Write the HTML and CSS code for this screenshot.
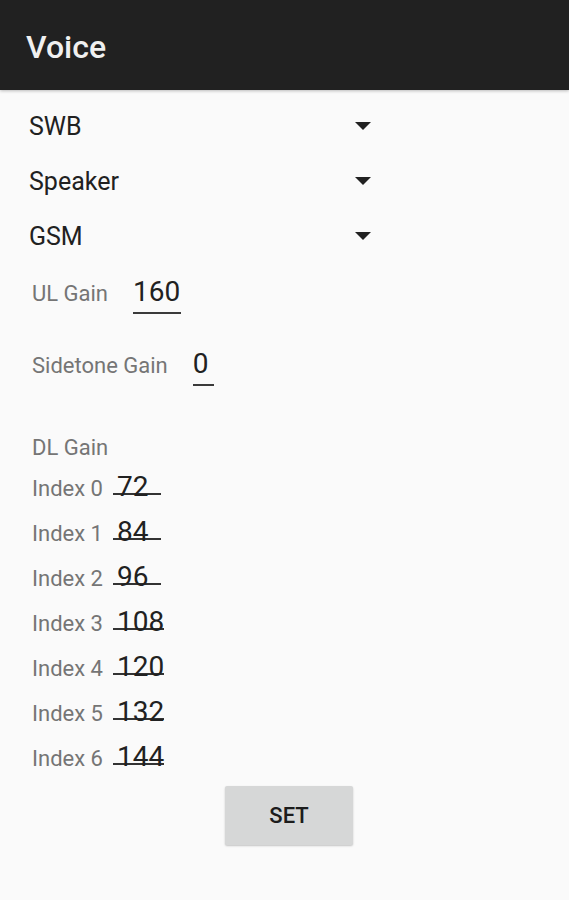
FILE: index.html
```html
<!DOCTYPE html>
<html lang="en">
<head>
<meta charset="utf-8">
<title>Voice</title>
<link rel="stylesheet" href="styles.css">
</head>
<body>
<header class="appbar"><h1 class="title">Voice</h1></header>
<main class="content">
  <div class="spinners">
    <div class="spinner"><span class="spinner-text">SWB</span><svg class="arrow" width="16" height="8" viewBox="0 0 16 8"><path d="M0 0H16L8 8Z"/></svg></div>
    <div class="spinner"><span class="spinner-text">Speaker</span><svg class="arrow" width="16" height="8" viewBox="0 0 16 8"><path d="M0 0H16L8 8Z"/></svg></div>
    <div class="spinner"><span class="spinner-text">GSM</span><svg class="arrow" width="16" height="8" viewBox="0 0 16 8"><path d="M0 0H16L8 8Z"/></svg></div>
  </div>
  <div class="field-row ul-row"><span class="label">UL Gain</span><span class="value ul-value">160</span></div>
  <div class="field-row side-row"><span class="label">Sidetone Gain</span><span class="value side-value">0</span></div>
  <div class="label dl-label">DL Gain</div>
  <div class="index-list">
    <div class="index-row"><span class="label">Index 0</span><span class="index-value">72</span></div>
    <div class="index-row"><span class="label">Index 1</span><span class="index-value">84</span></div>
    <div class="index-row"><span class="label">Index 2</span><span class="index-value">96</span></div>
    <div class="index-row"><span class="label">Index 3</span><span class="index-value">108</span></div>
    <div class="index-row"><span class="label">Index 4</span><span class="index-value">120</span></div>
    <div class="index-row"><span class="label">Index 5</span><span class="index-value">132</span></div>
    <div class="index-row"><span class="label">Index 6</span><span class="index-value">144</span></div>
  </div>
  <button class="set-button" type="button">SET</button>
</main>
</body>
</html>
```
FILE: styles.css
```css
html, body {
  margin: 0;
  padding: 0;
}
body {
  background: #fafafa;
  font-family: Roboto, "Noto Sans", sans-serif;
  width: 569px;
  min-height: 900px;
}
.appbar {
  height: 90px;
  box-sizing: border-box;
  background: #212121;
  padding: 31px 0 0 26px;
  box-shadow: 0 1px 3px rgba(0, 0, 0, 0.25);
  position: relative;
}
.title {
  margin: 0;
  font-size: 32px;
  line-height: 32px;
  font-weight: 500;
  color: #f0f0f0;
}
.content {
  padding-top: 9px;
}
.spinner {
  display: flex;
  align-items: center;
  justify-content: space-between;
  width: 342px;
  height: 55px;
  padding-left: 29px;
}
.spinner-text {
  font-size: 25px;
  line-height: 55px;
  color: #212121;
}
.arrow {
  display: block;
  fill: #212121;
  margin-top: -2px;
}
.field-row {
  display: flex;
  align-items: baseline;
  gap: 25px;
  padding-left: 32px;
}
.label {
  font-size: 22px;
  line-height: 26px;
  color: #757575;
}
.value {
  font-size: 28px;
  line-height: 34px;
  color: #212121;
  padding-bottom: 5px;
  background: linear-gradient(#3a3a3a, #3a3a3a) no-repeat left 37px / 100% 2px;
}
.ul-value {
  padding-left: 0;
  padding-right: 1px;
}
.side-value {
  min-width: 21px;
}
.ul-row {
  margin-top: 11px;
}
.side-row {
  margin-top: 32.5px;
}
.dl-label {
  margin-top: 49px;
  padding-left: 32px;
}
.index-list {
  margin-top: 9px;
}
.index-row {
  display: flex;
  align-items: baseline;
  gap: 10px;
  padding-left: 32px;
  height: 45px;
}
.index-value {
  font-size: 28px;
  line-height: 34px;
  color: #212121;
  box-sizing: border-box;
  min-width: 48px;
  padding-left: 4px;
  background: linear-gradient(#333, #333) no-repeat left 23px / 100% 2px;
}
.set-button {
  display: block;
  margin: 1.5px 0 0 225px;
  width: 128px;
  height: 59px;
  border: none;
  border-radius: 2px;
  background: #d6d7d7;
  box-shadow: 0 1px 2px rgba(0, 0, 0, 0.22);
  font-family: Roboto, "Noto Sans", sans-serif;
  font-size: 22px;
  font-weight: 500;
  color: #1c1c1c;
  padding: 0;
}
```
